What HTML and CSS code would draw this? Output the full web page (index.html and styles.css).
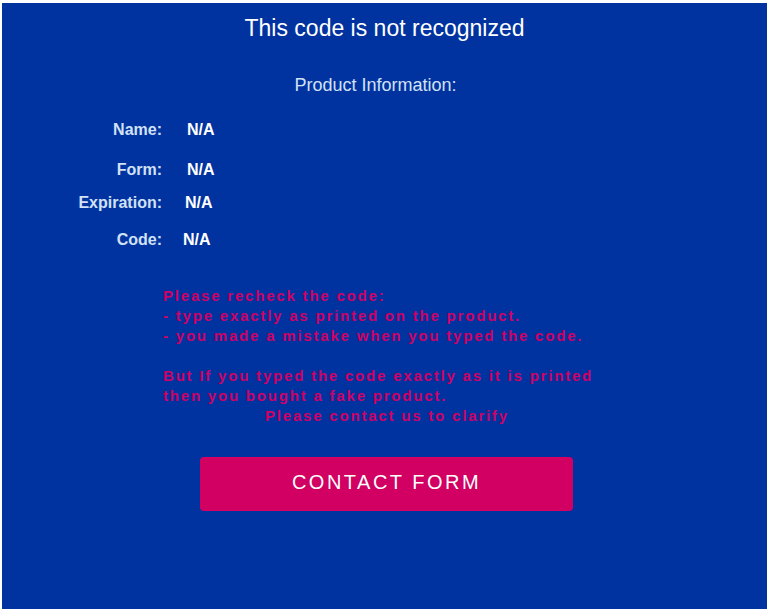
FILE: index.html
```html
<!DOCTYPE html>
<html lang="en">
<head>
  <meta charset="UTF-8" />
  <meta name="viewport" content="width=device-width, initial-scale=1.0" />
  <title>Code Check</title>
  <link rel="stylesheet" href="styles.css">
</head>
<body>
  <div class="panel">
    <h1 class="title">This code is not recognized</h1>
    <p class="info-head">Product Information:</p>

    <div class="info">
      <div class="row">
        <span class="label">Name:</span>
        <span class="value">N/A</span>
      </div>
      <div class="row row-form">
        <span class="label">Form:</span>
        <span class="value">N/A</span>
      </div>
      <div class="row row-exp">
        <span class="label">Expiration:</span>
        <span class="value value-exp">N/A</span>
      </div>
      <div class="row row-code">
        <span class="label">Code:</span>
        <span class="value value-code">N/A</span>
      </div>
    </div>

    <div class="warning">
      <p>Please recheck the code:<br>- type exactly as printed on the product.<br>- you made a mistake when you typed the code.</p>
      <p>But If you typed the code exactly as it is printed<br>then you bought a fake product.</p>
      <p class="warning-last">Please contact us to clarify</p>
    </div>

    <button class="contact-btn">CONTACT FORM</button>
  </div>
</body>
</html>
```

FILE: styles.css
```css
* {
  box-sizing: border-box;
}

body {
  margin: 0;
  padding: 3px 2px 0 2px;
  background: #ffffff;
  font-family: "Liberation Sans", Arial, sans-serif;
  overflow: hidden;
}

.panel {
  background: #0033a0;
  height: calc(100vh - 3px);
  padding-top: 12px;
  display: flex;
  flex-direction: column;
}

.title {
  margin: 0;
  font-size: 23px;
  font-weight: normal;
  line-height: 26px;
  color: #ffffff;
  text-align: center;
}

.info-head {
  margin: 34px 0 0 0;
  padding-right: 18px;
  font-size: 18px;
  line-height: 21px;
  color: #d2e1f5;
  text-align: center;
}

.info {
  margin-top: 24px;
  display: flex;
  flex-direction: column;
}

.row {
  display: flex;
  font-size: 16px;
  font-weight: bold;
  line-height: 20px;
}

.row-form {
  margin-top: 20px;
}

.row-exp {
  margin-top: 13px;
}

.row-code {
  margin-top: 17px;
}

.label {
  width: 160px;
  text-align: right;
  color: #d2e1f5;
}

.value {
  padding-left: 25px;
  color: #ffffff;
}

.value-exp {
  padding-left: 23px;
}

.value-code {
  padding-left: 21px;
}

.warning {
  margin: 36px 0 0 161px;
  color: #d00066;
  font-size: 15px;
  font-weight: bold;
  line-height: 20px;
  letter-spacing: 1.8px;
}

.warning p {
  margin: 0 0 20px 0;
}

.warning .warning-last {
  margin: -20px 0 0 0;
  padding-left: 102px;
}

.contact-btn {
  align-self: flex-start;
  margin: 31px 0 0 198px;
  width: 373px;
  height: 54px;
  border: none;
  border-radius: 4px;
  background: #d10062;
  color: #ffffff;
  font-family: "Liberation Sans", Arial, sans-serif;
  font-size: 20px;
  letter-spacing: 2.5px;
  padding: 0 0 3px 0;
}
```
